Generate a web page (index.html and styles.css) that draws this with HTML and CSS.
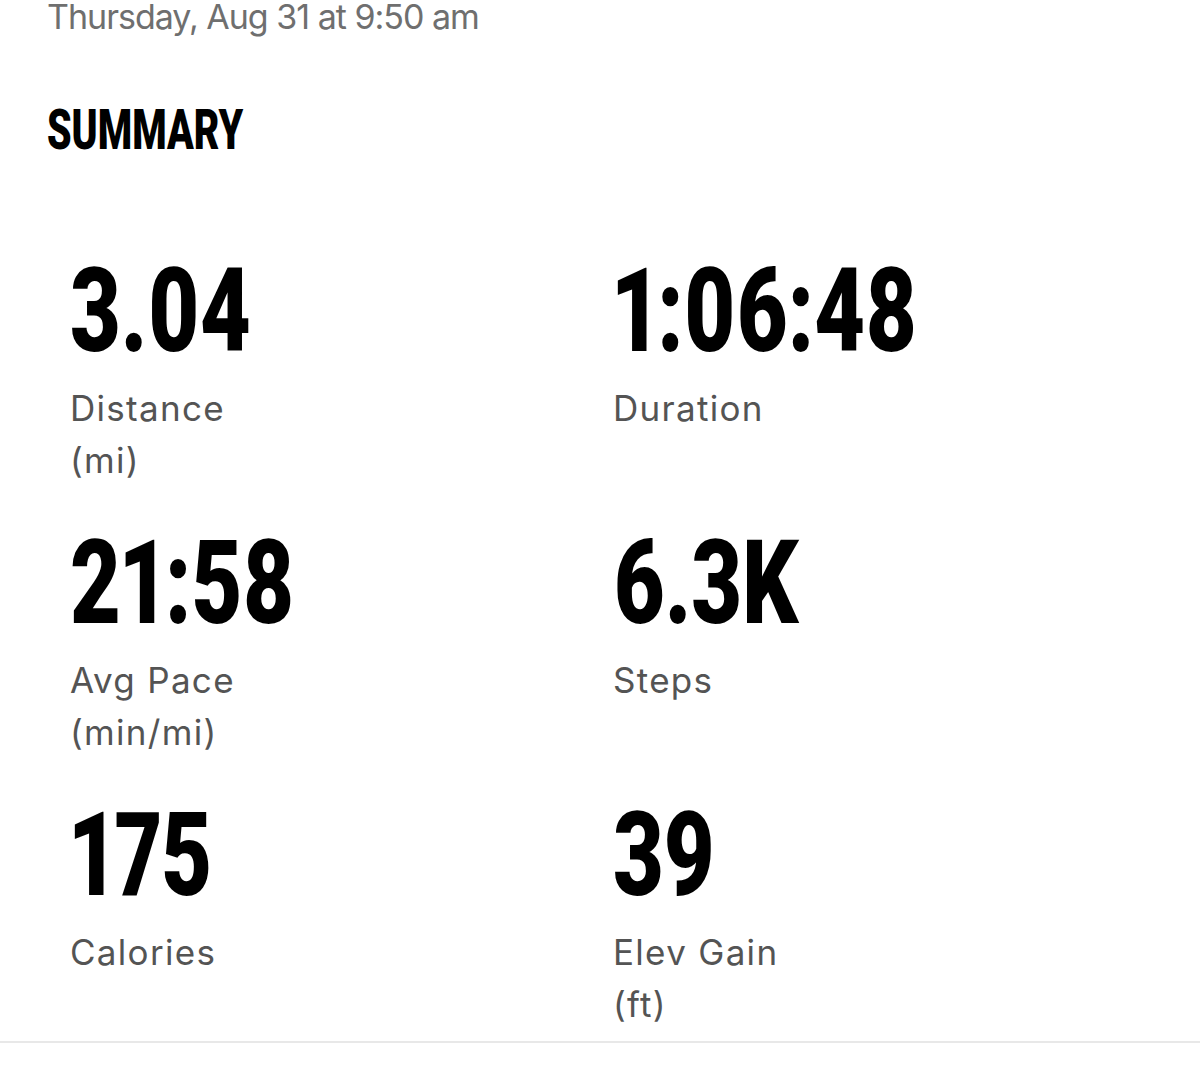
FILE: index.html
```html
<!DOCTYPE html>
<html lang="en">
<head>
  <meta charset="UTF-8">
  <title>Run Summary</title>
  <link rel="stylesheet" href="styles.css">
</head>
<body>
  <div class="page">
    <div class="run-date">Thursday, Aug 31 at 9:50 am</div>

    <h2 class="section-title"><span>SUMMARY</span></h2>

    <div class="stats">
      <div class="stat">
        <div class="stat-value"><span>3.04</span></div>
        <div class="stat-label">Distance<br>(mi)</div>
      </div>
      <div class="stat">
        <div class="stat-value"><span>1:06:48</span></div>
        <div class="stat-label">Duration</div>
      </div>
      <div class="stat">
        <div class="stat-value"><span>21:58</span></div>
        <div class="stat-label">Avg Pace<br>(min/mi)</div>
      </div>
      <div class="stat">
        <div class="stat-value"><span>6.3K</span></div>
        <div class="stat-label">Steps</div>
      </div>
      <div class="stat">
        <div class="stat-value"><span>175</span></div>
        <div class="stat-label">Calories</div>
      </div>
      <div class="stat">
        <div class="stat-value"><span>39</span></div>
        <div class="stat-label">Elev Gain<br>(ft)</div>
      </div>
    </div>
  </div>
  <div class="divider"></div>
</body>
</html>
```

FILE: styles.css
```css
body {
  margin: 0;
  background: #ffffff;
  font-family: 'Inter', 'Liberation Sans', sans-serif;
  overflow: hidden;
}

.page {
  padding-left: 47px;
}

.run-date {
  font-size: 34px;
  line-height: 34px;
  letter-spacing: -1px;
  color: #6f6f6f;
}

.section-title {
  margin: 66px 0 0;
  font-family: 'Roboto', sans-serif;
  font-weight: 900;
  font-size: 55px;
  line-height: 60px;
  color: #000000;
}

.section-title span,
.stat-value span {
  display: inline-block;
  transform: scaleX(0.715);
  transform-origin: left center;
}

.stats {
  display: grid;
  grid-template-columns: 543px 1fr;
  row-gap: 47px;
  margin-top: 101px;
  padding-left: 23px;
}

.stat-value {
  font-family: 'Roboto', sans-serif;
  font-weight: 900;
  font-size: 117px;
  line-height: 100px;
  font-variant-numeric: proportional-nums;
  color: #000000;
}

.stat-value span {
  transform: scaleX(0.75);
}

.stat-label {
  margin-top: 21px;
  min-height: 104px;
  font-size: 35px;
  line-height: 52px;
  letter-spacing: 1.3px;
  color: #545454;
}

.divider {
  margin-top: 11px;
  height: 2px;
  background: #e8e8e8;
}
```
